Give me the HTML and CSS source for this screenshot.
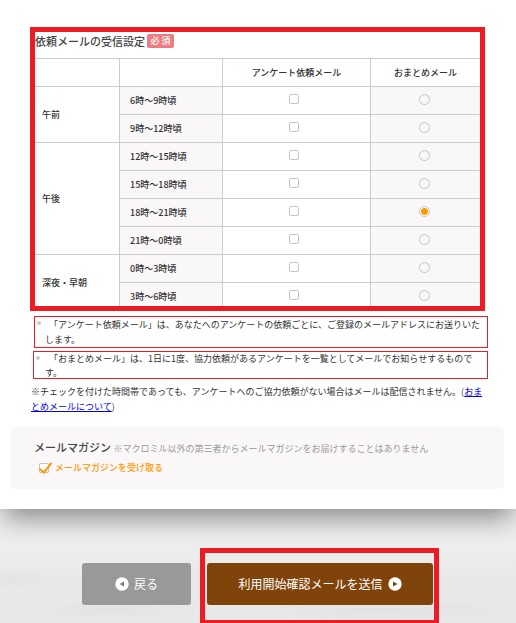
FILE: index.html
```
<!DOCTYPE html>
<html lang="ja">
<head>
	<meta charset="utf-8"/>
	<title>依頼メールの受信設定</title>
	<link rel="stylesheet" href="styles.css">
</head>
<body>
	<form id="wrap">
		<div id="card">
			<section class="setting">
				<h2>依頼メールの受信設定 <span class="must">必 須</span></h2>
				<table>
					<colgroup>
						<col class="zone"/><col class="time"/><col class="ask"/><col class="sum"/>
					</colgroup>
					<thead>
						<tr><td></td><td></td><th>アンケート依頼メール</th><th>おまとめメール</th></tr>
					</thead>
					<tbody>
						<tr>
							<th rowspan="2" class="zone">午前</th>
							<th class="time">6時～9時頃</th>
							<td class="ask"><input type="checkbox" aria-label="アンケート依頼メール 6時～9時頃"/></td>
							<td class="sum"><input type="radio" name="summary" aria-label="おまとめメール 6時～9時頃"/></td>
						</tr>
						<tr>
							<th class="time">9時～12時頃</th>
							<td class="ask"><input type="checkbox" aria-label="アンケート依頼メール 9時～12時頃"/></td>
							<td class="sum"><input type="radio" name="summary" aria-label="おまとめメール 9時～12時頃"/></td>
						</tr>
						<tr>
							<th rowspan="4" class="zone">午後</th>
							<th class="time">12時～15時頃</th>
							<td class="ask"><input type="checkbox" aria-label="アンケート依頼メール 12時～15時頃"/></td>
							<td class="sum"><input type="radio" name="summary" aria-label="おまとめメール 12時～15時頃"/></td>
						</tr>
						<tr>
							<th class="time">15時～18時頃</th>
							<td class="ask"><input type="checkbox" aria-label="アンケート依頼メール 15時～18時頃"/></td>
							<td class="sum"><input type="radio" name="summary" aria-label="おまとめメール 15時～18時頃"/></td>
						</tr>
						<tr>
							<th class="time">18時～21時頃</th>
							<td class="ask"><input type="checkbox" aria-label="アンケート依頼メール 18時～21時頃"/></td>
							<td class="sum"><input type="radio" name="summary" checked aria-label="おまとめメール 18時～21時頃"/></td>
						</tr>
						<tr>
							<th class="time">21時～0時頃</th>
							<td class="ask"><input type="checkbox" aria-label="アンケート依頼メール 21時～0時頃"/></td>
							<td class="sum"><input type="radio" name="summary" aria-label="おまとめメール 21時～0時頃"/></td>
						</tr>
						<tr>
							<th rowspan="2" class="zone">深夜・早朝</th>
							<th class="time">0時～3時頃</th>
							<td class="ask"><input type="checkbox" aria-label="アンケート依頼メール 0時～3時頃"/></td>
							<td class="sum"><input type="radio" name="summary" aria-label="おまとめメール 0時～3時頃"/></td>
						</tr>
						<tr>
							<th class="time">3時～6時頃</th>
							<td class="ask"><input type="checkbox" aria-label="アンケート依頼メール 3時～6時頃"/></td>
							<td class="sum"><input type="radio" name="summary" aria-label="おまとめメール 3時～6時頃"/></td>
						</tr>
					</tbody>
				</table>
			</section>

			<ul class="notes">
				<li>「アンケート依頼メール」は、あなたへのアンケートの依頼ごとに、ご登録のメールアドレスにお送りいた<br/>します。</li>
				<li class="short">「おまとめメール」は、1日に1度、協力依頼があるアンケートを一覧としてメールでお知らせするもので<br/>す。</li>
			</ul>
			<p class="remark">※チェックを付けた時間帯であっても、アンケートへのご協力依頼がない場合はメールは配信されません。(<a href="#">おま<br/>とめメールについて</a>)</p>

			<section class="magazine">
				<h2>メールマガジン <small>※マクロミル以外の第三者からメールマガジンをお届けすることはありません</small></h2>
				<p><input type="checkbox" id="mag" checked/><label for="mag">メールマガジンを受け取る</label></p>
			</section>
		</div>

		<div class="btnArea">
			<button type="button" class="back">
				<svg width="14" height="14" viewBox="0 0 14 14"><circle cx="7" cy="7" r="6.7" fill="#fff"/><path d="M9 4.500v5L4.500 7z" fill="#777"/></svg>
				戻る
			</button>
			<div class="focus">
				<button type="submit" class="send">
					利用開始確認メールを送信
					<svg width="14" height="14" viewBox="0 0 14 14"><circle cx="7" cy="7" r="6.7" fill="#fff"/><path d="M5 4.500v5L9.500 7z" fill="#80430a"/></svg>
				</button>
			</div>
		</div>
	</form>
</body>
</html>
```
FILE: styles.css
```
*{margin:0; padding:0; box-sizing:border-box;}
body{background:#e8e8e8; color:#333; font:9px/15px "Noto Sans CJK JP", sans-serif;}
h2{font-size:11px; font-weight:500; color:#444; white-space:nowrap;}
ul{list-style:none;}

#card{position:relative; background:#fff; padding:27px 12px 20px 11px; box-shadow:0 12px 26px -4px rgba(0,0,0,0.45);}

/* 受信設定 */
.setting{height:284px; margin:0 19px; border:5px solid #ed1c24; overflow:hidden;}
.setting h2{height:26px; line-height:18px;}
.must{display:inline-block; height:14px; margin-top:2px; padding:0 3px; border-radius:2px; background:#ee7b82; color:#fff; font-size:9px; line-height:14px; vertical-align:top;}

table{width:100%; table-layout:fixed; border-collapse:separate; border-spacing:0;}
col.zone{width:84px;}
col.time{width:103px;}
col.ask{width:148px;}
th, td{height:28px; border-top:1px solid #ccc; border-left:1px solid #ccc; font-weight:500; text-align:center; vertical-align:middle;}
th.zone, thead td:first-child{border-left:none;}
th.zone{padding-left:7px; text-align:left;}
th.time{padding-left:10px; text-align:left; background:#f9f7f8;}
td.ask{padding:0 6px 3px 0;}
td.sum{padding:0 2px 2px 0; background:#f9f7f8;}

input{appearance:none; display:block; margin:0 auto; border:1px solid #c4c4c4; background:#fff;}
input[type="checkbox"]{width:10px; height:10px; border-radius:2px;}
input[type="radio"]{width:11px; height:11px; border-radius:50%; background:#f9f7f8;}
input[type="radio"]:checked{background:radial-gradient(circle, #f90 3px, #fff 4px);}

/* 注意書き */
.notes{margin:5px 16px 0 22px;}
.notes li{position:relative; margin-left:1px; padding-left:10px; border:1px solid #ed1c24; text-indent:4px; white-space:nowrap;}
.notes li.short{height:28px; margin:3px 0 0; padding-left:11px; line-height:14px;}
.notes li:before{content:""; position:absolute; left:2px; top:4px; width:4px; height:4px; border-radius:50%; background:#ccc;}
.remark{margin:5px 0 0 20px; white-space:nowrap;}
.remark a{color:#00e;}

/* メールマガジン */
.magazine{margin-top:13px; padding:13px 23px 14px; border-radius:5px; background:#f9f7f8;}
.magazine small{font-size:9px; font-weight:400; color:#999;}
.magazine p{display:flex; align-items:center; margin:4px 0 0 5px; color:#f90; font-weight:500;}
.magazine input{position:relative; margin:0 6px 0 0; border-radius:1px;}
.magazine input:checked:before{content:""; position:absolute; left:2px; top:-4px; width:5px; height:11px; border:solid #f90; border-width:0 2px 2px 0; transform:rotate(38deg);}

/* ボタン */
.btnArea{display:flex; justify-content:center; align-items:flex-start; gap:9px; padding:39px 0 0 5px;
background:radial-gradient(70px 10px at 110px 101px, #e2e2e2, transparent), radial-gradient(130px 10px at 390px 101px, #e2e2e2, transparent), radial-gradient(40px 12px at 12px 70px, #e4e4e4, transparent), linear-gradient(#eee 40px, #e8e8e8 70px);}
.focus{padding:10px 1px 15px 2px; border:5px solid #ed1c24; border-bottom-width:3px;}
button{display:flex; justify-content:center; align-items:center; gap:5px; height:42px; border:none; border-radius:3px; color:#fff; font:12px/16px "Noto Sans CJK JP", sans-serif; white-space:nowrap;}
.back{width:109px; margin-top:15px; background:#999;}
.send{width:226px; background:#80430a;}
```
